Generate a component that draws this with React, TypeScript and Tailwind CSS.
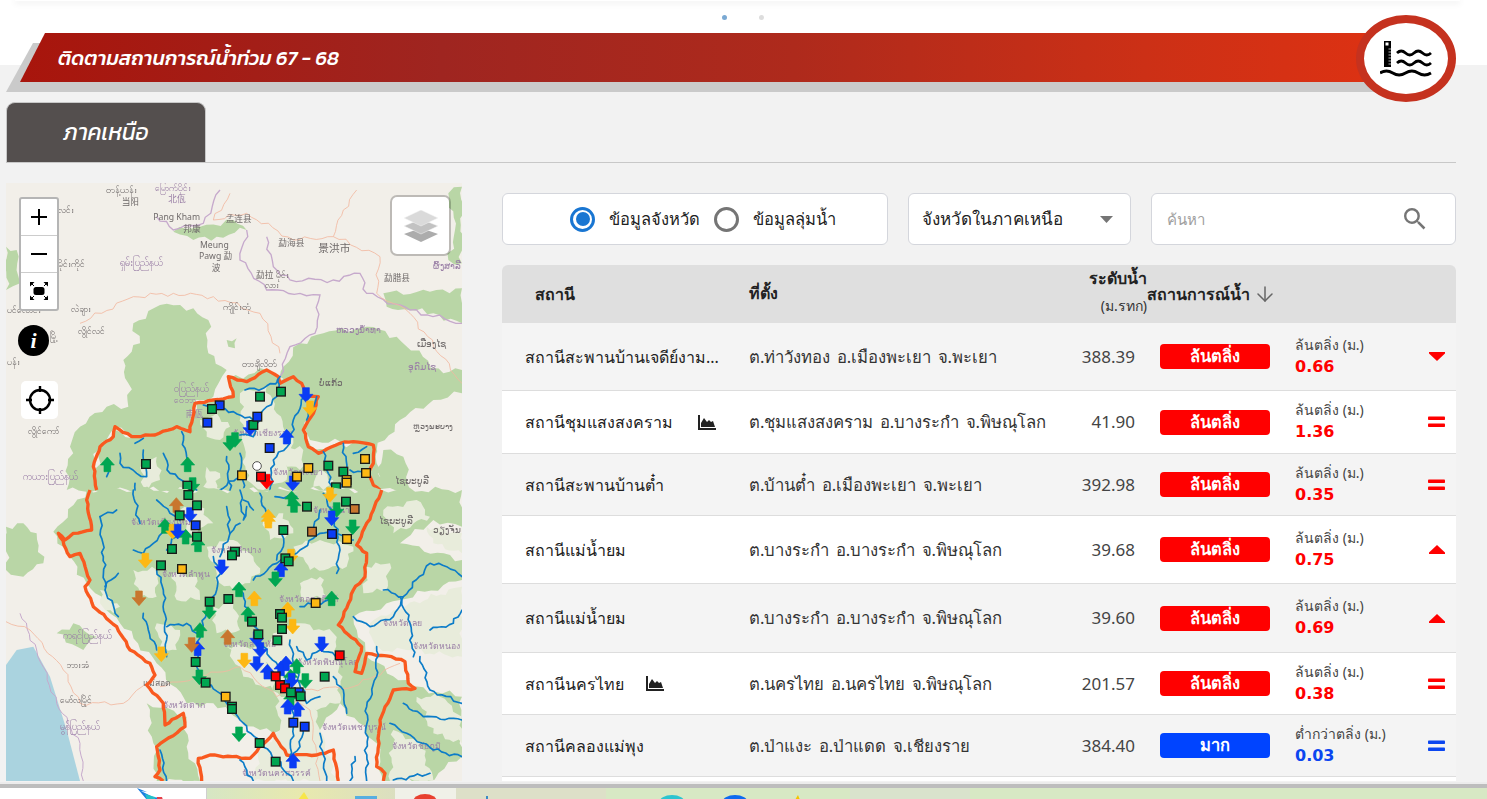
import { ArrowDown } from "lucide-react";

type Trend = "up" | "down" | "eq";
type Row = {
  name: string;
  chart?: string;
  loc: string;
  val: string;
  status: string;
  label: string;
  level: string;
  trend: Trend;
  blue?: boolean;
  cls: string;
};

const rows: Row[] = [
  { name: "สถานีสะพานบ้านเจดีย์งาม...", loc: "ต.ท่าวังทอง อ.เมืองพะเยา จ.พะเยา", val: "388.39", status: "ล้นตลิ่ง", label: "ล้นตลิ่ง (ม.)", level: "0.66", trend: "down", cls: "h-[68px] bg-[#f4f4f4]" },
  { name: "สถานีชุมแสงสงคราม", chart: "ml-[25px]", loc: "ต.ชุมแสงสงคราม อ.บางระกำ จ.พิษณุโลก", val: "41.90", status: "ล้นตลิ่ง", label: "ล้นตลิ่ง (ม.)", level: "1.36", trend: "eq", cls: "h-[63px] bg-white" },
  { name: "สถานีสะพานบ้านต๋ำ", loc: "ต.บ้านต๋ำ อ.เมืองพะเยา จ.พะเยา", val: "392.98", status: "ล้นตลิ่ง", label: "ล้นตลิ่ง (ม.)", level: "0.35", trend: "eq", cls: "h-[62px] bg-[#f4f4f4]" },
  { name: "สถานีแม่น้ำยม", loc: "ต.บางระกำ อ.บางระกำ จ.พิษณุโลก", val: "39.68", status: "ล้นตลิ่ง", label: "ล้นตลิ่ง (ม.)", level: "0.75", trend: "up", cls: "h-[68px] bg-white" },
  { name: "สถานีแม่น้ำยม", loc: "ต.บางระกำ อ.บางระกำ จ.พิษณุโลก", val: "39.60", status: "ล้นตลิ่ง", label: "ล้นตลิ่ง (ม.)", level: "0.69", trend: "up", cls: "h-[69px] bg-[#f4f4f4]" },
  { name: "สถานีนครไทย", chart: "ml-[22px]", loc: "ต.นครไทย อ.นครไทย จ.พิษณุโลก", val: "201.57", status: "ล้นตลิ่ง", label: "ล้นตลิ่ง (ม.)", level: "0.38", trend: "eq", cls: "h-[62px] bg-white" },
  { name: "สถานีคลองแม่พุง", loc: "ต.ป่าแงะ อ.ป่าแดด จ.เชียงราย", val: "384.40", status: "มาก", label: "ต่ำกว่าตลิ่ง (ม.)", level: "0.03", trend: "eq", blue: true, cls: "h-[62px] bg-[#f4f4f4]" },
];

function rough(p: string, amp: number, step: number, closed = false) {
  const pts = p.trim().split(" ").map((s) => s.split(",").map(Number));
  if (closed) pts.push(pts[0]);
  const out: string[] = [];
  let k = 0;
  for (let i = 0; i < pts.length - 1; i++) {
    const [x0, y0] = pts[i];
    const [x1, y1] = pts[i + 1];
    const dx = x1 - x0;
    const dy = y1 - y0;
    const len = Math.hypot(dx, dy) || 1;
    const n = Math.max(1, Math.round(len / step));
    for (let j = 0; j < n; j++) {
      const t = j / n;
      const o = j === 0 ? 0 : amp * (Math.sin(k * 1.3 + x0 * 0.03) + 0.6 * Math.sin(k * 2.9 + y0 * 0.05));
      out.push(`${(x0 + dx * t - (dy / len) * o).toFixed(1)},${(y0 + dy * t + (dx / len) * o).toFixed(1)}`);
      k++;
    }
  }
  const last = pts[pts.length - 1];
  out.push(`${last[0]},${last[1]}`);
  return out.join(" ");
}

const C = { g: "#00a651", b: "#0a3cf5", y: "#fdb813", r: "#ff0000", o: "#c8762e" } as const;
type Col = keyof typeof C;
type Mk = [number, number, Col];

const greensTop = [
  "400,430 480,375 580,385 625,420 625,520 680,570 640,650 585,660 570,750 530,740 460,770 390,770 345,740 300,790 280,860 290,930 200,930 210,800 240,740 320,680 385,680 385,610 370,540 420,490",
  "850,560 900,490 970,460 1100,440 1190,470 1330,580 1386,570 1386,640 1300,660 1200,720 1130,810 1130,930 1060,790 930,780 910,700 940,660 880,600 840,590",
  "1150,340 1290,335 1386,325 1386,430 1300,400 1230,390 1160,380",
  "520,155 600,140 700,120 740,150 650,170 580,180",
  "18,200 50,210 60,310 18,330",
  "1345,40 1386,20 1386,250 1345,240 1365,150",
  "280,930 300,790 345,750 395,775 530,745 570,760 590,670 700,650 690,595 800,570 840,600 900,590 950,650 910,750 940,810 1020,790 1120,795 1140,930",
  "1150,810 1210,830 1230,930 1130,930",
  "680,480 710,475 705,505 685,500",
];
const palesTop = [
  "720,640 800,620 830,700 880,790 860,900 790,930 740,900 730,790",
  "600,720 650,700 690,740 660,780 620,770",
  "860,800 910,810 900,870 860,860",
  "420,860 470,830 480,900 430,920",
  "960,870 1000,900 970,930 940,920",
  "620,860 660,880 650,930 610,920",
];

const greensLow = [
  "160,125 260,0 1386,0 1386,110 1300,90 1200,160 1386,210 1386,270 1200,330 1060,380 1100,500 1230,590 1386,620 1386,800 1280,873 1150,873 1130,760 1020,640 960,720 780,720 720,690 640,640 560,640 470,520 360,400 260,280 210,200",
  "18,110 70,100 110,130 130,220 70,260 18,240",
  "170,430 220,400 290,440 250,480",
  "440,640 560,680 560,770 600,873 470,873 460,760",
];
const palesLow = [
  "620,170 700,150 760,200 780,250 700,300 660,280",
  "880,170 960,150 1060,170 1040,230 930,240",
  "820,430 900,400 1000,430 1020,520 1020,640 920,660 830,560 780,500",
  "680,470 780,470 830,620 840,720 780,780 760,873 1010,873 960,720 940,640 860,620 730,560",
  "1110,400 1180,360 1386,290 1386,500 1220,480 1120,480",
  "1250,620 1320,620 1386,680 1386,760 1300,730",
  "1180,720 1260,760 1300,873 1170,873",
  "300,300 360,350 340,370 300,340",
  "540,60 600,50 640,100 570,130",
  "400,240 470,240 470,320 420,320",
  "520,250 590,260 600,330 530,330",
  "640,350 700,340 720,420 650,430",
  "790,90 850,70 880,130 810,150",
  "1150,60 1250,30 1290,80 1180,130",
  "900,280 960,260 980,320 910,330",
  "1100,230 1170,220 1160,300 1090,310",
  "470,400 540,420 530,480 480,470",
  "1280,110 1386,130 1386,190 1300,160",
];

const borderTop = "290,930 280,860 300,800 340,770 345,740 395,770 465,765 530,740 570,755 585,670 640,660 700,650 685,590 740,605 800,570 835,590 840,610 880,590 905,610 920,650 955,650 940,700 910,750 925,800 955,820 1020,790 1060,785 1120,795 1120,850 1105,880 1120,915 1140,930";
const bordersLow = [
  "1145,0 1120,60 1070,165 1100,190 1095,260 1060,300 1030,380 1015,405 1085,470 1065,545 1085,550 1100,490 1175,500 1215,515 1225,580 1245,595 1180,600 1140,690 1130,830 1155,850 1150,873",
  "270,0 260,30 275,120 220,130 195,150 175,130 210,200 240,190 270,270 255,290 280,350 350,410 390,480 450,520 465,555 440,585 490,640 495,705 550,670 555,710 470,770 480,840 465,860 490,873",
  "605,873 595,805 630,795 750,805 820,730 860,795 950,795 1000,780 1015,873",
];

const riversTop = [
  "405,790 430,775", "360,820 360,850 410,880 440,890 430,810", "330,850 320,890", "490,820 510,880 560,910 590,930",
  "545,755 560,830 570,860", "680,830 690,930", "720,820 730,930", "660,930 730,880",
  "610,675 700,695 760,720 790,690 830,650 840,590", "735,630 790,625 835,600", "720,765 760,770 780,720",
  "810,930 820,840 870,790 880,720 915,650", "920,720 950,650", "970,815 985,880 1000,930", "1030,790 1040,870 1020,930",
  "1060,820 1100,800", "1050,870 1110,880", "405,910 405,930",
];
const riversLow = [
  "400,0 410,60 420,100", "470,30 510,70 540,90", "300,80 310,200 315,300 355,380", "350,60 300,80", "355,250 315,290",
  "400,180 430,190 460,160 500,120", "470,240 490,300 495,400 500,500", "430,370 445,420 470,480",
  "640,200 660,240 650,300 620,370 600,430 590,510 600,570 660,610 720,690 780,760 830,810 860,850 880,873",
  "680,50 690,130 660,200", "720,0 730,90 740,50", "780,10 800,80", "760,270 830,220 900,180 960,130 1000,130 1060,150",
  "970,10 1000,70 1020,180 1010,250", "825,20 890,20", "720,300 750,370 790,470 840,540 870,600 880,700 870,800",
  "900,350 1000,330", "870,450 880,520 920,640 960,620", "890,470 920,510 960,480 1020,500", "1000,560 1030,600 1040,670",
  "910,700 900,770 880,790", "1150,300 1210,320 1290,220 1340,230 1386,260", "1200,320 1230,400 1240,500",
  "1060,380 1110,410 1180,380 1210,320", "1130,470 1130,560 1100,650 1100,873", "1386,360 1360,400 1290,420",
  "1260,500 1290,600 1386,640", "1210,640 1270,680 1386,690", "1170,700 1220,730 1300,780 1386,800", "1180,870 1290,850",
  "480,780 500,873", "720,810 760,873", "1050,873 1065,800", "960,730 980,873", "500,410 560,400 590,430",
  "730,30 760,60", "940,120 960,60", "850,120 850,170 830,210", "540,120 500,180", "690,130 720,100",
];

const sqTop: Mk[] = [[780,650,"g"],[843,635,"g"],[659,676,"b"],[636,687,"g"],[438,852,"g"],[985,857,"g"],[1030,875,"g"],[562,917,"g"],[1008,922,"g"],[760,735,"g"],[772,710,"b"],[622,728,"b"],[809,804,"b"],[726,886,"y"],[891,890,"y"],[925,864,"y"],[1095,837,"y"],[1098,879,"y"],[1040,900,"y"],[1040,908,"y"],[783,890,"r"]];
const upTop: Mk[] = [[860,770,"b"],[322,853,"g"],[563,853,"g"]];
const downTop: Mk[] = [[918,645,"b"],[930,685,"y"],[750,745,"b"],[690,790,"g"],[705,780,"g"],[800,905,"r"],[878,910,"b"],[578,915,"g"]];

const sqLow: Mk[] = [[565,15,"g"],[591,46,"g"],[539,76,"g"],[591,140,"g"],[516,177,"g"],[483,226,"g"],[850,120,"g"],[921,50,"g"],[1038,35,"g"],[705,185,"g"],[696,196,"g"],[856,205,"g"],[866,214,"g"],[629,335,"g"],[685,327,"g"],[756,395,"g"],[840,372,"g"],[846,383,"g"],[846,417,"g"],[775,433,"g"],[832,451,"g"],[587,516,"g"],[617,578,"g"],[696,650,"g"],[696,657,"g"],[779,759,"g"],[827,815,"g"],[974,560,"g"],[936,125,"o"],[1064,57,"o"],[587,106,"b"],[996,132,"b"],[880,698,"b"],[914,710,"b"],[896,607,"b"],[1041,147,"y"],[546,237,"y"],[947,339,"y"],[677,620,"y"],[1019,496,"r"],[840,585,"r"],[855,595,"r"],[827,559,"r"],[873,607,"g"],[902,619,"g"]];
const upLow: Mk[] = [[529,45,"o"],[495,108,"g"],[557,140,"g"],[594,163,"g"],[875,25,"g"],[882,45,"g"],[805,80,"y"],[805,92,"y"],[843,238,"b"],[717,298,"g"],[763,325,"y"],[995,325,"g"],[863,358,"y"],[744,372,"g"],[600,420,"g"],[593,475,"b"],[683,441,"o"],[802,545,"b"],[843,535,"b"],[858,520,"b"],[890,528,"g"],[872,560,"g"],[872,625,"g"],[863,650,"b"],[893,657,"b"],[879,812,"b"]];
const downLow: Mk[] = [[570,75,"b"],[518,125,"y"],[533,125,"b"],[436,212,"y"],[990,15,"y"],[1010,60,"g"],[995,85,"b"],[1058,112,"g"],[665,232,"b"],[826,268,"g"],[873,200,"y"],[417,325,"o"],[878,410,"y"],[628,365,"g"],[575,465,"o"],[770,447,"b"],[781,480,"b"],[484,493,"y"],[733,512,"y"],[770,522,"b"],[965,463,"b"],[875,572,"b"],[916,573,"g"],[598,562,"g"],[717,733,"g"]];

type Lb = [number, number, string, number?];
const grayTop: Lb[] = [[318,40,"တန့်ယန်း"],[365,75,"当阳"],[460,120,"Pang Kham"],[550,155,"邦康"],[677,125,"孟连县"],[600,203,"Meung"],[597,238,"Pawg 勐"],[635,272,"波"],[835,197,"勐海县"],[955,216,"景洪市",32],[768,293,"勐拉 မိုင်း"],[795,323,"လား"],[1152,303,"勐腊县"],[175,260,"မိုင်းကိုင်"],[213,395,"လဲချား"],[670,390,"ကျိုင်းတုံ"],[235,463,"လွိုင်လင်"],[22,400,"ပင်လောင်း"],[150,478,"မြို့"],[85,762,"လွိုင်ကော်"],[725,562,"တာချီလိတ်"],[957,618,"ບໍ່ແກ້ວ"],[1250,500,"ເມືອງໄຊ"],[1240,748,"ຫຼວງພະບາງ",24],[1185,912,"ໄຊຍະບູລີ"],[175,98,"လင်း"],[22,555,"ပန်း"]];
const purpleTop: Lb[] = [[465,34,"မြောက်ပိုင်း"],[505,65,"北佤"],[360,258,"ရှမ်းပြည်နယ်",30],[68,900,"ကယားပြည်နယ်",30],[522,635,"ဝပြည်နယ်",30],[522,670,"ဝေဘာ"],[557,712,"南佤"],[1008,458,"ຫລວງນໍ້າທາ"],[1225,570,"ອຸດົມໄຊ"],[1300,268,"ຜົ້ງສາລີ"],[700,768,"จังหวัดเชียงราย"],[820,885,"จังหวัดพะเยา"]];
const purpleLow: Lb[] = [[392,105,"จังหวัดเชียงใหม่"],[632,188,"จังหวัดลำปาง"],[487,262,"จังหวัดลำพูน"],[837,337,"จังหวัดอุตรดิตถ์"],[668,472,"จังหวัดสุโขทัย"],[890,525,"จังหวัดพิษณุโลก"],[1150,408,"จังหวัดเลย"],[1238,477,"จังหวัดหนอง"],[490,655,"จังหวัดตาก"],[965,720,"จังหวัดเพชรบูรณ์"],[1175,778,"จังหวัดชัยภูมิ"],[725,858,"จังหวัดนครสวรรค์"],[190,447,"ကရင်ပြည်နယ်",30],[180,720,"မွန်ပြည်နယ်",30],[940,70,"จังหวัดน่าน"]];
const grayLow: Lb[] = [[197,535,"ဘားအံ"],[180,640,"မော်လမြိုင်"],[430,587,"แม่สอด"],[1138,103,"ໄຊຍະບູລີ"],[1300,128,"ວຽງຈັນ"]];

function Labels({ items, fill }: { items: Lb[]; fill: string }) {
  return (
    <g fill={fill} fontFamily="'Noto Sans','Noto Sans CJK SC',sans-serif">
      {items.map(([x, y, t, s]) => (
        <text key={t + x} x={x} y={y} fontSize={s ?? 26}>{t}</text>
      ))}
    </g>
  );
}

function Markers({ sq, up, down }: { sq: Mk[]; up: Mk[]; down: Mk[] }) {
  const arrow = "M0,-22 L21,2 L10,2 L10,22 L-10,22 L-10,2 L-21,2 Z";
  return (
    <>
      {up.map(([x, y, c]) => (
        <path key={`u${x}${y}`} d={arrow} transform={`translate(${x} ${y})`} fill={C[c]} stroke={C[c]} strokeWidth={2} strokeLinejoin="round" />
      ))}
      {down.map(([x, y, c]) => (
        <path key={`d${x}${y}`} d={arrow} transform={`translate(${x} ${y}) rotate(180)`} fill={C[c]} stroke={C[c]} strokeWidth={2} strokeLinejoin="round" />
      ))}
      {sq.map(([x, y, c]) => (
        <rect key={`s${x}${y}`} x={x - 13} y={y - 13} width={26} height={26} fill={C[c]} stroke="#1a1a1a" strokeWidth={4} />
      ))}
    </>
  );
}

const adminTop = ["470,110 520,150 610,130 660,30", "740,150 720,240 800,330 900,340 960,345 945,460 870,500 840,590", "800,170 820,260 870,300 1000,300 1080,280 1100,340 1230,390 1386,430"];
const roadTop = ["240,430 400,350 520,340 640,350 780,400 840,520", "690,40 640,120 740,100 880,180 1000,170 1140,230 1130,340 1230,400 1386,610", "1070,30 1030,90 1000,170"];

function MapDrawing() {
  const river = { fill: "none", stroke: "#0c7cc8", strokeWidth: 5, strokeLinejoin: "round" as const, strokeLinecap: "round" as const };
  const bd = { fill: "none", stroke: "#f9591f", strokeWidth: 10, strokeLinejoin: "round" as const };
  const green = "#b9d6a6";
  const pale = "#e8ecdb";
  return (
    <svg viewBox="6 183 456 598" className="block w-full h-full blur-[0.35px]">
      <rect x="6" y="183" width="456" height="598" fill="#f2efe9" />
      <g transform="translate(0 180) scale(0.33333)">
        {greensTop.map((p) => <polygon key={p} points={rough(p, 7, 20, true)} fill={green} />)}
        {palesTop.map((p) => <polygon key={p} points={rough(p, 6, 14, true)} fill={pale} />)}
        {adminTop.map((p) => <polyline key={p} points={rough(p, 5, 18)} fill="none" stroke="#c6a9cc" strokeWidth={4} />)}
        {roadTop.map((p) => <polyline key={p} points={rough(p, 5, 18)} fill="none" stroke="#f2b8a0" strokeWidth={2.5} />)}
        <Labels items={grayTop} fill="#6f6a6a" />
        <Labels items={purpleTop} fill="#9a7fa6" />
        <polyline points={rough(borderTop, 1.8, 14)} {...bd} />
        {riversTop.map((p) => <polyline key={p} points={rough(p, 4, 13)} {...river} />)}
        <circle cx="771" cy="858" r="13" fill="#fff" stroke="#333" strokeWidth={2.5} />
        <Markers sq={sqTop} up={upTop} down={downTop} />
      </g>
      <g transform="translate(0 490) scale(0.33333)">
        <polygon points="18,525 50,480 100,470 150,560 200,720 240,873 18,873" fill="#aad3df" />
        {greensLow.map((p) => <polygon key={p} points={rough(p, 7, 20, true)} fill={green} />)}
        {palesLow.map((p) => <polygon key={p} points={rough(p, 6, 14, true)} fill={pale} />)}
        <polyline points={rough("60,370 110,480 170,640 240,760 250,873", 4, 18)} fill="none" stroke="#c6a9cc" strokeWidth={3} />
        <polyline points={rough("18,395 90,420 190,540 240,640 370,640 440,580", 4, 18)} fill="none" stroke="#f2b8a0" strokeWidth={2.5} />
        <polyline points={rough("480,590 600,560 720,530 830,620 900,600 1060,590 1200,520", 4, 18)} fill="none" stroke="#f2b8a0" strokeWidth={2.5} />
        <polyline points={rough("860,620 930,660 960,873", 4, 18)} fill="none" stroke="#f2b8a0" strokeWidth={2.5} />
        <Labels items={grayLow} fill="#6f6a6a" />
        <Labels items={purpleLow} fill="#9a7fa6" />
        {bordersLow.map((p) => <polyline key={p} points={rough(p, 1.8, 14)} {...bd} />)}
        {riversLow.map((p) => <polyline key={p} points={rough(p, 4, 13)} {...river} />)}
        <Markers sq={sqLow} up={upLow} down={downLow} />
      </g>
    </svg>
  );
}

function ChartIcon({ className }: { className?: string }) {
  return (
    <svg viewBox="0 0 18 15" className={className} fill="#222">
      <path d="M0 0h2v13h16v2H0z" />
      <path d="M3 12V8l3-5 3 4 2-2 2 2 2-1 2 6z" />
    </svg>
  );
}

function TrendIcon({ t, blue }: { t: Trend; blue?: boolean }) {
  const fill = blue ? "#0b46f0" : "#ff0000";
  if (t === "eq") {
    return (
      <svg viewBox="0 0 17 12" className="w-[17px] h-[12px]" fill={fill}>
        <rect width="17" height="3.6" y="0.5" rx="0.8" />
        <rect width="17" height="3.6" y="7.5" rx="0.8" />
      </svg>
    );
  }
  return (
    <svg viewBox="0 0 16 9" className="w-[16px] h-[9px]" fill={fill}>
      {t === "down" ? <path d="M0 0h16v1.5L8 9 0 1.5z" /> : <path d="M8 0l8 7.5V9H0V7.5z" />}
    </svg>
  );
}

function Radio({ on, label }: { on?: boolean; label: string }) {
  return (
    <div className="flex items-center">
      <span className={`flex items-center justify-center w-[25px] h-[25px] rounded-full border-[3px] ${on ? "border-[#1976d2]" : "border-[#757575]"}`}>
        {on && <span className="w-[14px] h-[14px] rounded-full bg-[#1976d2]" />}
      </span>
      <span className="ml-[14px] text-[16.5px] text-[#222]">{label}</span>
    </div>
  );
}

export default function App() {
  return (
    <div className="relative flex flex-col w-[1487px] h-[799px] overflow-hidden bg-[linear-gradient(to_bottom,#ffffff_65px,#f2f2f2_65px)] font-['Noto_Sans',sans-serif]">
      <div className="h-px ml-[15px] mr-[27px] bg-white shadow-[0_1px_6px_rgba(0,0,0,0.25)]" />
      <div className="flex h-[32px] pl-[722px] pt-[14px] gap-[32px]">
        <span className="w-[5px] h-[5px] rounded-full bg-[#7aa9d3]" />
        <span className="w-[5px] h-[5px] rounded-full bg-[#dddddd]" />
      </div>

      <div className="relative ml-[6px] mr-[31px] h-[69px]">
        <div className="absolute left-0 right-[50px] top-[10px] h-[49px] bg-[#cacaca] [clip-path:polygon(27px_0,100%_0,100%_100%,0_100%)]" />
        <div className="relative flex items-center ml-[14px] mr-[30px] h-[49px] pl-[38px] bg-[linear-gradient(to_right,#a8150c_0%,#9f2520_30%,#ae2a1c_55%,#cc3016_80%,#e03212_100%)] [clip-path:polygon(25px_0,100%_0,100%_100%,0_100%)]">
          <span className="font-['Kanit',sans-serif] italic font-medium text-[20px] text-white">ติดตามสถานการณ์น้ำท่วม 67 - 68</span>
        </div>
        <div className="absolute right-0 top-[-18px] flex items-center justify-center w-[100px] h-[87px] rounded-[50%] border-[8px] border-[#c5321f] bg-white">
          <svg viewBox="0 0 52 36" className="w-[52px] h-[36px]">
            <rect x="4" y="0" width="7" height="26" fill="#000" />
            <rect x="5.5" y="1.5" width="3" height="3" fill="#fff" />
            <path d="M8.5 8h2.5M8.5 11h2.5M8.5 14h2.5M8.5 17h2.5M8.5 20h2.5M8.5 23h2.5" stroke="#fff" strokeWidth="0.7" />
            <path d="M17 12Q21.2 8 25.5 12T34 12T42.5 12T51 12M17 22Q21.2 18 25.5 22T34 22T42.5 22T51 22M0 32Q6.4 28 12.75 32T25.5 32T38.2 32T51 32" fill="none" stroke="#000" strokeWidth="2.8" />
          </svg>
        </div>
      </div>

      <div className="flex mx-[6px] w-[1450px] h-[61px] border-b border-[#c8c8c8]">
        <div className="flex items-center justify-center w-[200px] h-[60px] rounded-t-[9px] bg-[#544f4e] border border-b-0 border-[#c8c8c8]">
          <span className="font-['Kanit',sans-serif] italic text-[22.5px] text-white">ภาคเหนือ</span>
        </div>
      </div>

      <div className="flex ml-[6px] pt-[20px] h-[619px] w-[1450px]">
        <div className="relative shrink-0 w-[456px] h-[598px] overflow-hidden">
          <MapDrawing />
          <div className="absolute left-[13px] top-[14px] flex flex-col w-[40px] h-[114px] rounded-[3px] bg-white border-2 border-[#b5b5b5]">
            <div className="flex flex-1 items-center justify-center border-b border-[#cccccc]">
              <svg viewBox="0 0 16 16" className="w-[16px] h-[16px]"><path d="M8 0v16M0 8h16" stroke="#000" strokeWidth="2" /></svg>
            </div>
            <div className="flex flex-1 items-center justify-center border-b border-[#cccccc]">
              <svg viewBox="0 0 16 16" className="w-[16px] h-[16px]"><path d="M0 8h16" stroke="#000" strokeWidth="2" /></svg>
            </div>
            <div className="flex flex-1 items-center justify-center">
              <svg viewBox="0 0 18 18" className="w-[18px] h-[18px]">
                <rect x="3.5" y="5" width="11" height="8" rx="2.5" fill="#000" />
                <path d="M0 0h4.5L0 4.5zM18 0v4.5L13.500 0zM0 18v-4.500L4.500 18zM18 18h-4.500L18 13.500z" fill="#000" />
                <path d="M1 1l3 3M17 1l-3 3M1 17l3-3M17 17l-3-3" stroke="#000" strokeWidth="1" />
              </svg>
            </div>
          </div>
          <div className="absolute left-[386px] top-[14px] flex items-center justify-center w-[57px] h-[57px] rounded-[5px] bg-white shadow-[0_0_0_2px_rgba(0,0,0,0.22)]">
            <svg viewBox="0 0 34 32" className="w-[34px] h-[32px]">
              <path d="M17 18L34 24 17 32 0 24z" fill="#acacac" />
              <path d="M17 9L34 16 17 24 0 16z" fill="#c2c2c2" stroke="#f5f5f5" strokeWidth="0.5" />
              <path d="M17 0L34 8 17 16 0 8z" fill="#dadada" stroke="#f5f5f5" strokeWidth="0.5" />
            </svg>
          </div>
          <div className="absolute left-[12px] top-[142px] flex items-center justify-center w-[31px] h-[31px] rounded-full bg-black">
            <span className="font-['Liberation_Serif',serif] italic font-bold text-[22px] leading-none text-white">i</span>
          </div>
          <div className="absolute left-[15px] top-[198px] flex items-center justify-center w-[37px] h-[38px] rounded-[5px] bg-white">
            <svg viewBox="0 0 28 28" className="w-[28px] h-[28px]">
              <circle cx="14" cy="14" r="10" fill="none" stroke="#000" strokeWidth="2.4" />
              <path d="M14 0v6M14 22v6M0 14h6M22 14h6" stroke="#000" strokeWidth="2.4" />
            </svg>
          </div>
        </div>

        <div className="flex flex-col flex-1 ml-[40px] pt-[10px]">
          <div className="flex gap-[20px] h-[52px]">
            <div className="flex items-center justify-center gap-[14px] w-[386px] rounded-[6px] bg-white border border-[#d4d6dc] pl-[16px]">
              <Radio on label="ข้อมูลจังหวัด" />
              <Radio label="ข้อมูลลุ่มน้ำ" />
            </div>
            <div className="flex items-center justify-between w-[223px] rounded-[6px] bg-white border border-[#d4d6dc] pl-[13px] pr-[17px]">
              <span className="text-[17px] text-[#222]">จังหวัดในภาคเหนือ</span>
              <svg viewBox="0 0 13 7" className="w-[13px] h-[7px]"><path d="M0 0h13L6.500 7z" fill="#757575" /></svg>
            </div>
            <div className="flex items-center justify-between w-[305px] rounded-[6px] bg-white border border-[#d4d6dc] pl-[15px] pr-[29px]">
              <span className="text-[15px] text-[#a0a0a0]">ค้นหา</span>
              <svg viewBox="3 3 18 18" className="w-[22px] h-[22px]"><path fill="#757575" d="M15.5 14h-.79l-.28-.27A6.471 6.471 0 0 0 16 9.5 6.5 6.5 0 1 0 9.5 16c1.61 0 3.09-.59 4.23-1.57l.27.28v.79l5 4.99L20.49 19l-4.99-5zm-6 0C7.01 14 5 11.99 5 9.5S7.01 5 9.5 5 14 7.01 14 9.5 11.99 14 9.5 14z" /></svg>
            </div>
          </div>

          <div className="flex items-center mt-[20px] h-[58px] rounded-t-[6px] bg-[#dfdfdf] text-[#222] font-semibold text-[16px]">
            <span className="ml-[33px] w-[214px]">สถานี</span>
            <span className="w-[344px] -mt-[2px]">ที่ตั้ง</span>
            <div className="flex flex-col items-end w-[54px] shrink-0 -mt-[7px]">
              <span className="whitespace-nowrap leading-[22px]">ระดับน้ำ</span>
              <span className="font-normal text-[14px] leading-[16px] text-[#333] mt-[9px] whitespace-nowrap">(ม.รทก)</span>
            </div>
            <span className="whitespace-nowrap">สถานการณ์น้ำ</span>
            <ArrowDown className="ml-[3px] w-[24px] h-[24px] text-[#666]" strokeWidth={1.5} />
          </div>

          {rows.map((r, i) => (
            <div key={i} className={`flex items-center shrink-0 border-b border-[#dddddd] ${r.cls}`}>
              <div className="flex items-center w-[247px] pl-[23px] text-[16px] text-[#222]">
                <span className="whitespace-nowrap">{r.name}</span>
                {r.chart && <ChartIcon className={`${r.chart} w-[18px] h-[15px]`} />}
              </div>
              <span className="w-[310px] text-[16.7px] [word-spacing:2px] text-[#333] whitespace-nowrap">{r.loc}</span>
              <span className="w-[76px] text-right text-[17px] text-[#444]">{r.val}</span>
              <span className={`ml-[25px] flex items-center justify-center w-[110px] h-[25px] rounded-[4px] text-white font-bold text-[16.5px] ${r.blue ? "bg-[#0044ff]" : "bg-[#ff0000]"}`}>{r.status}</span>
              <div className="ml-[25px] flex flex-col w-[125px]">
                <span className="text-[14px] leading-[19px] text-[#444] whitespace-nowrap">{r.label}</span>
                <span className={`font-['DejaVu_Sans',sans-serif] font-bold text-[16px] leading-[25px] ${r.blue ? "text-[#0b46f0]" : "text-[#ff0000]"}`}>{r.level}</span>
              </div>
              <div className="flex justify-center w-[17px] ml-[8px]">
                <TrendIcon t={r.trend} blue={r.blue} />
              </div>
            </div>
          ))}
          <div className="h-[4px] bg-white shrink-0" />
        </div>
      </div>

      <div className="h-[2px] bg-[#ececec] shrink-0" />
      <div className="h-[4px] bg-[#bdbdbd] shrink-0" />
      <div className="flex flex-1 overflow-hidden">
        <div className="flex justify-end w-[207px] pr-[43px] bg-white border-r border-[#cfcfcf]">
          <svg viewBox="0 0 26 12" className="w-[26px] h-[12px]">
            <path d="M0 0l10 4-6-1 12 6 8 1 2 2H10z" fill="#1e7fe0" />
            <path d="M8 6l10 3v3H10z" fill="#22c1c8" />
            <path d="M20 9l5 0 1 3h-6z" fill="#e5404a" />
          </svg>
        </div>
        <svg viewBox="207 0 1280 12" className="flex-1 h-[12px]">
          <defs>
            <linearGradient id="ft" x1="0" x2="1" y1="0" y2="0">
              <stop offset="0" stopColor="#d6e6c4" />
              <stop offset="0.5" stopColor="#e8e9ae" />
              <stop offset="1" stopColor="#dbdfc0" />
            </linearGradient>
          </defs>
          <rect x="207" y="0" width="1280" height="12" fill="#d7e8c4" />
          <rect x="207" y="0" width="188" height="12" fill="url(#ft)" />
          <rect x="395" y="0" width="61" height="12" fill="#f0f1e8" />
          <rect x="456" y="0" width="150" height="12" fill="#dde0c8" />
          <rect x="850" y="0" width="120" height="12" fill="#d9e3cc" />
          <path d="M298 12l6-8 5 8z" fill="#f7e64a" />
          <rect x="355" y="8" width="22" height="4" fill="#57aee0" />
          <ellipse cx="425" cy="14" rx="12" ry="8" fill="#e8402e" />
          <path d="M486 12v-4h2v4z" fill="#3a8ac8" />
          <ellipse cx="672" cy="15" rx="13" ry="8" fill="#2cc4d0" />
          <ellipse cx="735" cy="15" rx="13" ry="8" fill="#0e6af0" />
          <path d="M795 12l3-5 2 5z" fill="#f5c400" />
        </svg>
      </div>
    </div>
  );
}
